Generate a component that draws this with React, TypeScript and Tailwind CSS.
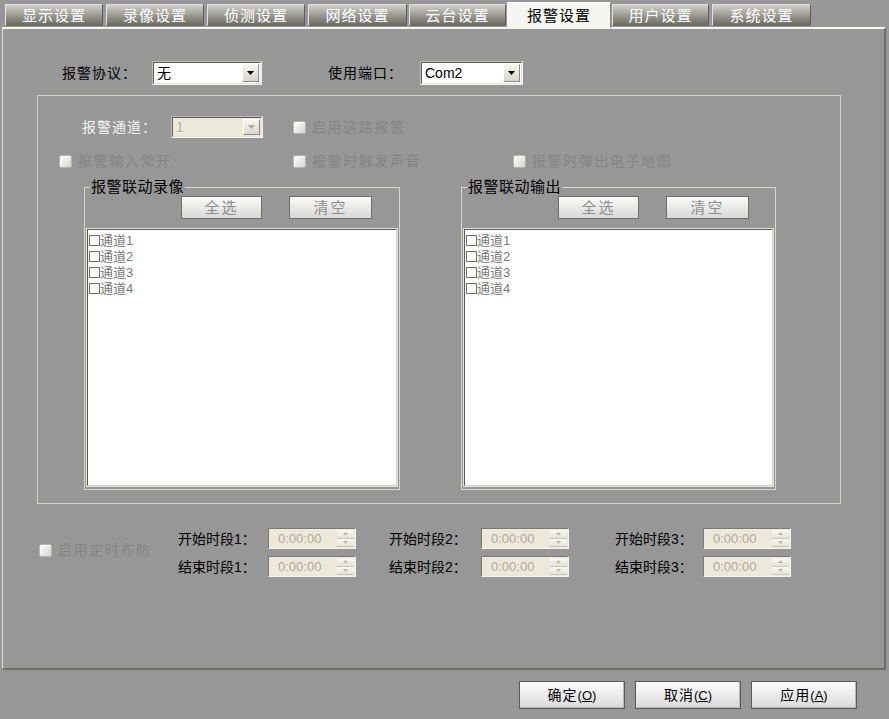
import React from "react";

const F = "font-['Liberation_Sans','Noto_Sans_CJK_SC',sans-serif]";

const tabs = [
  { l: "显示设置", c: "ml-[5px] w-[98px]" },
  { l: "录像设置", c: "ml-[3px] w-[98px]" },
  { l: "侦测设置", c: "ml-[3px] w-[98px]" },
  { l: "网络设置", c: "ml-[3px] w-[99px]" },
  { l: "云台设置", c: "ml-[2px] w-[97px]" },
  { l: "报警设置", c: "ml-[1px] w-[104px]", a: true },
  { l: "用户设置", c: "ml-[1px] w-[97px]" },
  { l: "系统设置", c: "ml-[3px] w-[99px]" },
];

function Arrow({ color = "#000" }: { color?: string }) {
  return (
    <svg width="7" height="4" viewBox="0 0 7 4">
      <path d="M0 0H7L3.5 4Z" fill={color} />
    </svg>
  );
}

function Select({ w, text, disabled }: { w: string; text: string; disabled?: boolean }) {
  return (
    <div className={`${w} flex border border-t-[#bcbcb4] border-l-[#bcbcb4] border-b-[#f4f4ee] border-r-[#f4f4ee]`}>
      <div
        className={`flex flex-1 border border-t-[#5e5e56] border-l-[#5e5e56] border-b-[#e4e4dc] border-r-[#e4e4dc] ${
          disabled ? "bg-[#ece9d8]" : "bg-white"
        }`}
      >
        <div
          className={`flex-1 pl-[3px] flex items-center text-[14px] leading-none ${
            disabled ? "text-[#b4b0a0]" : "text-black"
          }`}
        >
          {text}
        </div>
        <div className="w-[17px] m-[1px] flex items-center justify-center border border-t-white border-l-white border-b-[#8a8a82] border-r-[#8a8a82] bg-gradient-to-b from-[#f6f6f0] to-[#d6d6ce]">
          <Arrow color={disabled ? "#a8a8a0" : "#000"} />
        </div>
      </div>
    </div>
  );
}

function CheckBox() {
  return (
    <div className="w-[13px] h-[13px] rounded-[2px] border border-[#b4b4b0] bg-gradient-to-br from-[#ffffff] to-[#d4d4d0] shadow-[inset_1px_1px_0_#f8f8f8]" />
  );
}

function CheckItem({ label, c }: { label: string; c?: string }) {
  return (
    <div className={`flex items-center gap-[6px] ${c ?? ""}`}>
      <CheckBox />
      <span className="text-[14px] leading-none tracking-[1.6px] text-[#858585]">{label}</span>
    </div>
  );
}

function SmallBtn({ label, w, c }: { label: string; w: string; c?: string }) {
  return (
    <div
      className={`${w} ${c ?? ""} h-[23px] flex items-center justify-center border border-[#6e6e6a] bg-gradient-to-b from-[#fbfbfb] to-[#d8d8d6] text-[15px] leading-none tracking-[2px] text-[#8e8e8e]`}
    >
      {label}
    </div>
  );
}

function ListBox() {
  return (
    <div className="mt-[9px] mx-[1px] h-[259px] border border-[#e4e4dc]">
      <div className="h-full border border-t-[#5a5a52] border-l-[#5a5a52] border-b-[#d0d0c8] border-r-[#d0d0c8] bg-white pt-[2px] pl-[1px]">
        {["通道1", "通道2", "通道3", "通道4"].map((t) => (
          <div key={t} className="h-[16px] flex items-center">
            <div className="w-[11px] h-[11px] border border-[#6e6e6e] bg-white" />
            <span className="text-[13px] leading-none text-[#7a7a7a]">{t}</span>
          </div>
        ))}
      </div>
    </div>
  );
}

function SubGroup({ title, c }: { title: string; c: string }) {
  return (
    <div className={`${c} relative h-[303px] border border-[#d6d6ce]`}>
      <div className="absolute -top-[10px] left-[5px] px-[1px] bg-[#979797] text-[15px] leading-[18px] tracking-[0.5px] text-black">
        {title}
      </div>
      <div className="mt-[8px] flex pl-[96px]">
        <SmallBtn label="全选" w="w-[81px]" />
        <SmallBtn label="清空" w="w-[83px]" c="ml-[27px]" />
      </div>
      <ListBox />
    </div>
  );
}

function Spinner() {
  return (
    <div className="w-[88px] h-[21px] flex border border-t-[#7a7a72] border-l-[#7a7a72] border-b-[#f4f4ee] border-r-[#f4f4ee] bg-[#ece9d8]">
      <div className="flex-1 pl-[9px] flex items-center text-[13px] leading-none text-[#aeaa9b]">0:00:00</div>
      <div className="w-[17px] flex flex-col py-[1px] mr-[1px]">
        <div className="flex-1 flex items-center justify-center border-b border-[#c8c6b8] bg-gradient-to-b from-[#f8f8f2] to-[#e6e4d8]">
          <svg width="5" height="3" viewBox="0 0 5 3">
            <path d="M0 3H5L2.5 0Z" fill="#b8b6a8" />
          </svg>
        </div>
        <div className="flex-1 flex items-center justify-center border-b border-[#c8c6b8] bg-gradient-to-b from-[#f8f8f2] to-[#e6e4d8]">
          <svg width="5" height="3" viewBox="0 0 5 3">
            <path d="M0 0H5L2.5 3Z" fill="#b8b6a8" />
          </svg>
        </div>
      </div>
    </div>
  );
}

function TimeCol({ n, c, lw }: { n: string; c: string; lw: string }) {
  return (
    <div className={`${c} flex flex-col gap-[7px]`}>
      <div className="flex items-center h-[21px]">
        <span className={`${lw} text-[14px] leading-none text-black`}>开始时段{n}：</span>
        <Spinner />
      </div>
      <div className="flex items-center h-[21px]">
        <span className={`${lw} text-[14px] leading-none text-black`}>结束时段{n}：</span>
        <Spinner />
      </div>
    </div>
  );
}

function BigBtn({ label, k }: { label: string; k: string }) {
  return (
    <div className="w-[106px] h-[28px] flex items-center justify-center border border-[#5a5a5a] bg-gradient-to-b from-[#fcfcfc] to-[#dadada] shadow-[inset_-1px_-1px_0_#b8b8b8] text-[14px] leading-none text-black">
      <span className="tracking-[1px]">{label}</span>
      <span className="text-[13px]">
        (<span className="underline">{k}</span>)
      </span>
    </div>
  );
}

export default function App() {
  return (
    <div className={`w-[889px] h-[719px] bg-[#979797] overflow-hidden ${F}`}>
      {/* tabs */}
      <div className="h-[27px] flex items-start">
        {tabs.map((t) =>
          t.a ? (
            <div
              key={t.l}
              className={`${t.c} relative z-10 mt-[2px] h-[26px] flex items-center justify-center border-t border-l border-r border-t-[#ffffff] border-l-[#f8f8f4] border-r-[#8a8a82] bg-[#f6f6f0] text-[15px] leading-none tracking-[1px] text-black`}
            >
              {t.l}
            </div>
          ) : (
            <div
              key={t.l}
              className={`${t.c} mt-[4px] h-[22px] flex items-center justify-center border border-t-[#dcdcd4] border-l-[#e4e4dc] border-r-[#5e5e56] border-b-[#6a6a60] bg-gradient-to-b from-[#d2d2ca] via-[#9c9c94] to-[#6c6c62] text-[15px] leading-none tracking-[1px] text-white`}
            >
              {t.l}
            </div>
          )
        )}
      </div>

      {/* panel */}
      <div className="ml-[2px] w-[884px] h-[643px] border-t-2 border-t-[#f4f4f0] border-l border-l-[#dcdcd4] border-r-2 border-r-[#6e6e66] border-b-2 border-b-[#6e6e66]">
        {/* row 1 */}
        <div className="mt-[32px] h-[24px] flex items-center pl-[59px]">
          <span className="w-[90px] text-[14px] leading-none tracking-[1px] text-black">报警协议：</span>
          <Select w="w-[110px] h-[24px]" text="无" />
          <span className="ml-[66px] w-[92px] text-[14px] leading-none tracking-[1px] text-black">使用端口：</span>
          <Select w="w-[103px] h-[24px]" text="Com2" />
        </div>

        {/* big group */}
        <div className="mt-[10px] ml-[34px] w-[804px] h-[409px] border border-[#d2d2ca]">
          <div className="mt-[20px] h-[22px] flex items-center pl-[44px]">
            <span className="w-[89px] text-[14px] leading-none tracking-[1px] text-[#f4f4f4]">报警通道：</span>
            <Select w="w-[92px] h-[22px]" text="1" disabled />
            <CheckItem label="启用这路报警" c="ml-[30px]" />
          </div>
          <div className="mt-[16px] h-[14px] flex items-center pl-[21px]">
            <CheckItem label="报警输入常开" c="w-[234px]" />
            <CheckItem label="报警时触发声音" c="w-[220px]" />
            <CheckItem label="报警时弹出电子地图" />
          </div>
          <div className="mt-[19px] flex pl-[46px]">
            <SubGroup title="报警联动录像" c="w-[316px]" />
            <SubGroup title="报警联动输出" c="ml-[61px] w-[315px]" />
          </div>
        </div>

        {/* time section */}
        <div className="mt-[24px] flex">
          <div className="ml-[36px] w-[139px] mt-[15px] self-start">
            <CheckItem label="启用定时布防" />
          </div>
          <TimeCol n="1" c="w-[211px]" lw="w-[90px]" />
          <TimeCol n="2" c="w-[226px]" lw="w-[92px]" />
          <TimeCol n="3" c="" lw="w-[88px]" />
        </div>
      </div>

      {/* bottom buttons */}
      <div className="mt-[11px] flex pl-[519px] gap-[10px]">
        <BigBtn label="确定" k="O" />
        <BigBtn label="取消" k="C" />
        <BigBtn label="应用" k="A" />
      </div>
    </div>
  );
}
